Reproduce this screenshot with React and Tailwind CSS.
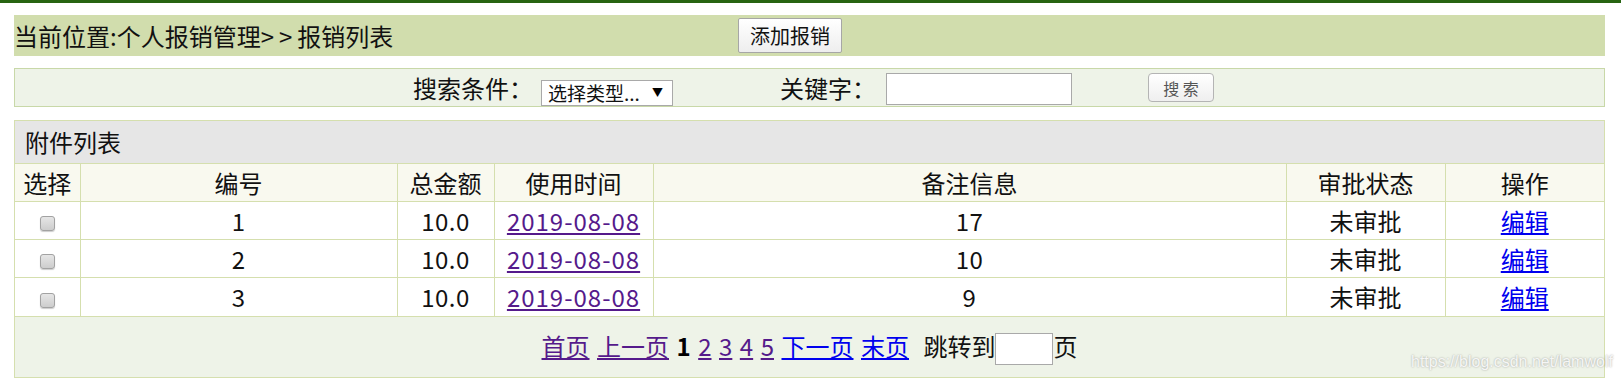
import React from "react";

const rows = [
  { id: 1, amount: "10.0", date: "2019-08-08", note: "17", status: "未审批" },
  { id: 2, amount: "10.0", date: "2019-08-08", note: "10", status: "未审批" },
  { id: 3, amount: "10.0", date: "2019-08-08", note: "9", status: "未审批" },
];

const cell = "border-l border-t border-[#d5dfae] first:border-l-0 text-center p-0";

function Checkbox() {
  return (
    <span className="inline-block align-middle w-[15px] h-[15px] rounded-[3px] border border-[#a2a2a2] bg-linear-to-b from-[#e6e6e6] to-[#cdcdcd] shadow-[0_1px_1px_rgba(0,0,0,0.2)]" />
  );
}

function Pagination() {
  return (
    <div className="h-[61px] bg-[#eef3e8] border-t border-[#d5dfae] flex items-center justify-center gap-[7.5px] text-[24px] leading-none pb-[2px]">
      <a href="#" className="underline text-[#551a8b]">首页</a>
      <a href="#" className="underline text-[#551a8b]">上一页</a>
      <span className="font-bold text-black">1</span>
      {[2, 3, 4, 5].map((n) => (
        <a key={n} href="#" className="underline text-[#551a8b]">
          {n}
        </a>
      ))}
      <a href="#" className="underline text-[#0000ee]">下一页</a>
      <a href="#" className="underline text-[#0000ee]">末页</a>
      <span className="ml-[7px] flex items-center text-[#111]">
        跳转到
        <input className="w-[58px] h-[32px] border border-[#a9a9a9] bg-white mt-[6px] outline-none" />
        页
      </span>
    </div>
  );
}

export default function App() {
  return (
    <div className="relative w-[1621px] h-[381px] bg-white overflow-hidden font-['Noto_Sans_CJK_SC',sans-serif] text-[#111]">
      <div className="h-[3px] bg-[#276412]" />

      {/* 当前位置 */}
      <div className="ml-[14px] w-[1591px] mt-[12px] h-[41px] bg-[#d1ddad] flex items-center">
        <span className="w-[724px] text-[24px] leading-none">
          当前位置:个人报销管理<span className="tracking-[5px]">&gt;&gt;</span>报销列表
        </span>
        <button className="w-[104px] h-[35px] border border-[#a6a6a6] rounded-[2px] bg-linear-to-b from-white to-[#eeeeee] text-[20px] leading-none">
          添加报销
        </button>
      </div>

      {/* 搜索 */}
      <div className="ml-[14px] w-[1591px] mt-[12px] h-[39px] border border-[#c8d8a8] bg-[#eef3e8] flex items-center pl-[398px]">
        <span className="w-[128px] text-[24px] leading-none">搜索条件：</span>
        <div className="w-[132px] h-[26px] mt-[10px] border border-[#a9a9a9] bg-white flex items-center justify-between pl-[6px] pr-[9px]">
          <span className="text-[19px] leading-none">选择类型...</span>
          <span className="text-[11px] leading-none text-black">▼</span>
        </div>
        <span className="ml-[107px] w-[106px] text-[24px] leading-none">关键字：</span>
        <input className="w-[186px] h-[32px] mt-[3px] border border-[#a9a9a9] bg-white outline-none" />
        <button className="ml-[76px] w-[66px] h-[29px] rounded-[4px] border border-[#b4b4b4] bg-linear-to-b from-white to-[#efefef] text-[16px] leading-none text-[#555] whitespace-pre">
          搜 索
        </button>
      </div>

      {/* 附件列表 */}
      <div className="ml-[14px] w-[1591px] mt-[13px] border border-[#d5dfae]">
        <div className="h-[42px] bg-[#e6e6e6] flex items-center pl-[10px] text-[24px] leading-none">附件列表</div>
        <table className="w-full table-fixed border-collapse text-[24px] leading-none">
          <colgroup>
            <col className="w-[65px]" />
            <col className="w-[317px]" />
            <col className="w-[97px]" />
            <col className="w-[159px]" />
            <col className="w-[633px]" />
            <col className="w-[159px]" />
            <col />
          </colgroup>
          <thead>
            <tr className="h-[38px] bg-[#f9f9ef]">
              {["选择", "编号", "总金额", "使用时间", "备注信息", "审批状态", "操作"].map((h) => (
                <th key={h} className={`${cell} font-normal`}>
                  {h}
                </th>
              ))}
            </tr>
          </thead>
          <tbody>
            {rows.map((r) => (
              <tr key={r.id} className="h-[38px] bg-white">
                <td className={cell}>
                  <Checkbox />
                </td>
                <td className={cell}>{r.id}</td>
                <td className={`${cell} tracking-[0.5px]`}>{r.amount}</td>
                <td className={cell}>
                  <a href="#" className="underline text-[#551a8b] tracking-[1px]">{r.date}</a>
                </td>
                <td className={`${cell} tracking-[0.5px]`}>{r.note}</td>
                <td className={cell}>{r.status}</td>
                <td className={cell}>
                  <a href="#" className="underline text-[#0000ee]">编辑</a>
                </td>
              </tr>
            ))}
          </tbody>
        </table>
        <Pagination />
      </div>

      <span className="absolute left-[1411px] top-[354px] font-['Liberation_Sans',sans-serif] text-[16px] leading-none text-[#f6f6f6] [text-shadow:0_0_2px_rgba(0,0,0,0.35)]">
        https://blog.csdn.net/lamwolf
      </span>
    </div>
  );
}
